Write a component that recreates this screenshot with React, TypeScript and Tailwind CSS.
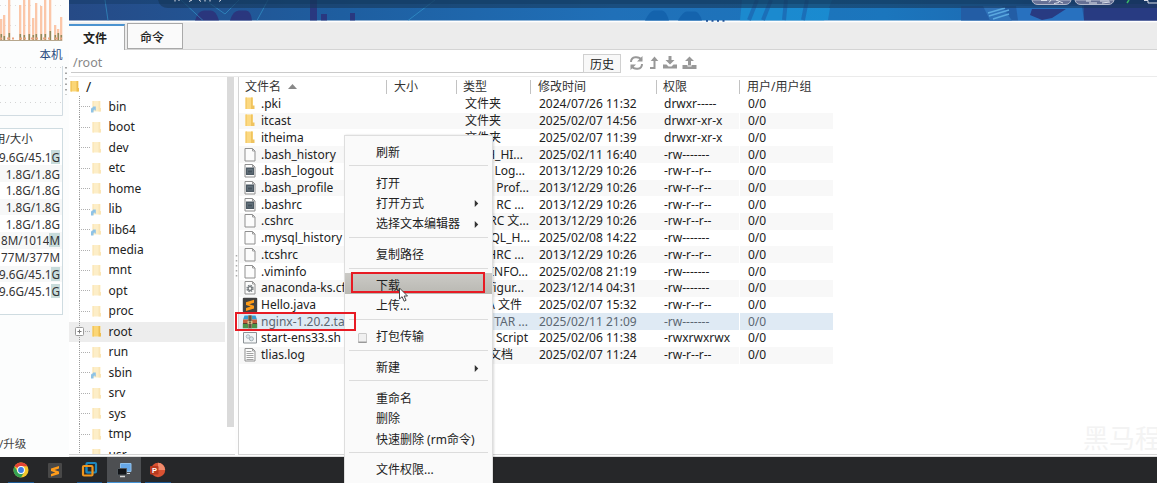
import React from "react";

type Kind = "folder" | "page" | "shell" | "config" | "sublime" | "archive" | "script" | "log";
type FileRow = { name: string; kind: Kind; type: string; end: number; time: string; perm: string; selected?: boolean };

const files: FileRow[] = [
  { name: ".pki", kind: "folder", type: "文件夹", end: 501, time: "2024/07/26 11:32", perm: "drwxr-----" },
  { name: "itcast", kind: "folder", type: "文件夹", end: 501, time: "2025/02/07 14:56", perm: "drwxr-xr-x" },
  { name: "itheima", kind: "folder", type: "文件夹", end: 501, time: "2025/02/07 11:39", perm: "drwxr-xr-x" },
  { name: ".bash_history", kind: "page", type: "BASH_HI...", end: 523, time: "2025/02/11 16:40", perm: "-rw-------" },
  { name: ".bash_logout", kind: "shell", type: "Bash Log...", end: 525, time: "2013/12/29 10:26", perm: "-rw-r--r--" },
  { name: ".bash_profile", kind: "shell", type: "Bash Prof...", end: 529, time: "2013/12/29 10:26", perm: "-rw-r--r--" },
  { name: ".bashrc", kind: "shell", type: "Bash RC ...", end: 524, time: "2013/12/29 10:26", perm: "-rw-r--r--" },
  { name: ".cshrc", kind: "page", type: "CSHRC 文...", end: 529, time: "2013/12/29 10:26", perm: "-rw-r--r--" },
  { name: ".mysql_history", kind: "page", type: "MYSQL_H...", end: 530, time: "2025/02/08 14:22", perm: "-rw-------" },
  { name: ".tcshrc", kind: "page", type: "TCSHRC ...", end: 524, time: "2013/12/29 10:26", perm: "-rw-r--r--" },
  { name: ".viminfo", kind: "page", type: "VIMINFO...", end: 528, time: "2025/02/08 21:19", perm: "-rw-------" },
  { name: "anaconda-ks.cfg", kind: "config", type: "Configur...", end: 524, time: "2023/12/14 04:31", perm: "-rw-------" },
  { name: "Hello.java", kind: "sublime", type: "JAVA 文件", end: 522, time: "2025/02/07 15:32", perm: "-rw-r--r--" },
  { name: "nginx-1.20.2.tar", kind: "archive", type: "TAR ...", end: 528, time: "2025/02/11 21:09", perm: "-rw-------", selected: true },
  { name: "start-ens33.sh", kind: "script", type: "Shell Script", end: 528, time: "2025/02/06 11:38", perm: "-rwxrwxrwx" },
  { name: "tlias.log", kind: "log", type: "文本文档", end: 513, time: "2025/02/07 11:24", perm: "-rw-r--r--" },
];

const tree = ["bin", "boot", "dev", "etc", "home", "lib", "lib64", "media", "mnt", "opt", "proc", "root", "run", "sbin", "srv", "sys", "tmp", "usr"];
const links = ["bin", "lib", "lib64", "sbin"];

const disks: [string, string][] = [
  ["9.6G/45.1", "G"], ["1.8G/1.8G", ""], ["1.8G/1.8G", ""], ["1.8G/1.8G", ""], ["1.8G/1.8G", ""],
  ["8M/1014", "M"], ["77M/377M", ""], ["9.6G/45.1", "G"], ["9.6G/45.1", "G"],
];

type Item = { label: string; arrow?: boolean; check?: boolean; hot?: boolean } | null;
const menu: Item[] = [
  { label: "刷新" }, null,
  { label: "打开" }, { label: "打开方式", arrow: true }, { label: "选择文本编辑器", arrow: true }, null,
  { label: "复制路径" }, null,
  { label: "下载", hot: true }, { label: "上传..." }, null,
  { label: "打包传输", check: true }, null,
  { label: "新建", arrow: true }, null,
  { label: "重命名" }, { label: "删除" }, { label: "快速删除 (rm命令)" }, null,
  { label: "文件权限..." },
];

function Folder({ strong, link }: { strong?: boolean; link?: boolean }) {
  return (
    <svg width="12" height="13" viewBox="0 0 12 13" className="shrink-0">
      <path d="M1.500 1h8v10.500h-8z" fill={strong ? "#fbd676" : "#fdeec8"} />
      <path d="M7.500 1h1.500v7h1v3.500H7.500z" fill={strong ? "#edbd50" : "#fae5b6"} />
      <path d="M1.500 1h1.500v10.500H1.500z" fill={strong ? "#f3c75f" : "#fbe8bb"} />
      {link && <path d="M0 12.500V9.600c0-1.400.8-2 2-2V6.400h2.800v4H3.700v-1C2.400 9.600 2.500 11 2.500 12.500z" fill="#8fc3e6" />}
    </svg>
  );
}

function FileIcon({ kind }: { kind: Kind }) {
  if (kind === "folder")
    return (
      <svg width="16" height="16" viewBox="0 0 16 16" className="shrink-0">
        <path d="M3.500 1.500h7.500v11.500H3.500z" fill="#fcd981" />
        <path d="M9 1.500h1.500v8h2V13H9z" fill="#efc35f" />
        <path d="M3.500 1.500H5V13H3.500z" fill="#f5cc6c" />
      </svg>
    );
  if (kind === "sublime")
    return (
      <svg width="16" height="16" viewBox="0 0 16 16" className="shrink-0">
        <rect x=".8" y=".8" width="14.400" height="14.400" rx="1" fill="#424242" />
        <path d="M4 5.300 12 2.800v2.900L7.300 7.200l4.700 1.500v2.700L4 13.900V11l4.700-1.500L4 8z" fill="#ff9c18" />
      </svg>
    );
  if (kind === "archive")
    return (
      <svg width="16" height="16" viewBox="0 0 16 16" className="shrink-0">
        <path d="M2.500 1.500h11L15 5.500H1z" fill="#379bd2" />
        <path d="M1 5.500h14V9.500H1z" fill="#c7603f" />
        <path d="M.8 9.500h14.400v4.800H.8z" fill="#4d9349" />
        <path d="M1 9h14v1H1z" fill="#5c402f" />
        <path d="M6 1.500h4v12.800H6z" fill="#8d7c5e" />
        <path d="M7.200 1.500h1.600v12.500H7.200z" fill="#554c3c" />
        <path d="M5.500 7h5v3h-5z" fill="#d5bd8a" />
        <path d="M7.200 7.500h1.600v2H7.200z" fill="#55442c" />
      </svg>
    );
  if (kind === "script")
    return (
      <svg width="16" height="16" viewBox="0 0 16 16" className="shrink-0">
        <path d="M1.500 2.500h13v10.500h-13z" fill="#f5f7f8" stroke="#8c9296" />
        <circle cx="6" cy="6.500" r="1.800" fill="#d9e6ec" stroke="#afbbc1" />
        <circle cx="9.400" cy="8.800" r="2" fill="#d9e6ec" stroke="#a3afb5" />
      </svg>
    );
  return (
    <svg width="16" height="16" viewBox="0 0 16 16" className="shrink-0">
      <path d="M3 1.500h7.500l2.500 2.500v10H3z" fill="#fcfcfc" stroke="#8f8f8f" />
      <path d="M10.500 1.500V4H13" fill="none" stroke="#9c9c9c" />
      {kind === "shell" && (
        <g>
          <path d="M4 4.500h8v7.500H4z" fill="#4c5963" />
          <path d="M5.200 6h5.600v4.500H5.200z" fill="#64727c" />
          <path d="M6 7.500h4v2H6z" fill="#46535d" />
        </g>
      )}
      {kind === "config" && (
        <g>
          <circle cx="8" cy="8.500" r="3" fill="none" stroke="#7a8084" strokeWidth="1.400" strokeDasharray="1.570 .785" />
          <circle cx="8" cy="8.500" r="1.900" fill="#fff" stroke="#6d7377" strokeWidth="1.200" />
        </g>
      )}
      {kind === "log" && <path d="M4.500 4.500h5M4.500 6.500h7M4.500 8.500h7M4.500 10.500h7M4.500 12.500h7" stroke="#a2a2a2" />}
    </svg>
  );
}

function Sidebar() {
  const bars = [[0, 22, 7], [3, 26, 5], [8, 42, 8], [19, 36, 7], [23, 42, 6], [28, 42, 7], [32, 23, 6], [35, 38, 7], [40, 35, 7], [44, 42, 7], [49, 42, 10], [54, 16, 6], [57, 12, 8], [60, 24, 6]];
  return (
    <aside className="flex h-[457px] w-[69px] shrink-0 flex-col overflow-hidden bg-[#fcfdfd]">
      <svg width="63" height="42" viewBox="0 0 63 42" className="shrink-0">
        <path d="M0 5.500h62M0 25.500h62" stroke="#ddd" strokeDasharray="1 4" />
        {bars.map(([x, h, g]) => (
          <g key={x}>
            <rect x={x} y={41 - h} width="2.300" height={h} fill="#fbc7a9" />
            <rect x={x + 0.5} y={41 - g} width="1.600" height={g} fill="#8f8a5c" />
          </g>
        ))}
        <path d="M0 38.500h62" stroke="#e8a480" strokeDasharray="2 5 3 2" strokeWidth="2" />
        <path d="M0 40.500h62" stroke="#b7a78d" />
      </svg>
      <div className="flex h-6 items-center pl-[39.500px] text-[11.500px] text-[#294a7d]"><span className="mt-[2px]">本机</span></div>
      <div className="flex">
        <svg width="63" height="51" viewBox="0 0 63 51">
          <path d="M0 1.500h62M0 19.500h62M0 36.500h62" stroke="#d5d5d5" strokeDasharray="1 4" />
          <path d="M62.500 0v49.500H0" stroke="#d2dce2" fill="none" />
        </svg>
        <svg width="6" height="30" viewBox="0 0 6 30"><path d="M3 1v28" stroke="#888" strokeWidth="1.500" strokeDasharray="1.500 4" /></svg>
      </div>
      <div className="mt-[11px] flex h-[187px] w-[63px] flex-col border-y border-r border-[#cfdce1] bg-white text-[#333]">
        <div className="flex h-[19.500px] items-center"><span className="-ml-[6px] text-[11.500px] whitespace-nowrap">用/大小</span></div>
        {disks.map(([a, b], i) => (
          <div key={i} className="flex h-[16.720px] items-center justify-end pr-[2px] text-[11.700px] leading-[16px] whitespace-nowrap odd:bg-[#f7f8f8]">
            <span>{a}</span>
            {b && <span className="bg-[#c8dcdb] leading-[14px]">{b}</span>}
          </div>
        ))}
      </div>
      <div className="mt-auto mb-[4px] -ml-[1px] text-[11.500px] leading-[18px] text-[#444]">/升级</div>
    </aside>
  );
}

function Banner() {
  return (
    <svg width="1088" height="23" viewBox="69 0 1088 23" className="shrink-0">
      <defs>
        <linearGradient id="sky" x1="0" x2="1">
          <stop offset="0" stopColor="#264a86" />
          <stop offset=".25" stopColor="#1e5ea0" />
          <stop offset=".5" stopColor="#2070b8" />
          <stop offset=".75" stopColor="#1b76bd" />
          <stop offset=".85" stopColor="#1d6cb4" />
          <stop offset="1" stopColor="#293c83" />
        </linearGradient>
      </defs>
      <path fill="#fff" d="M69 0h1088v23H69z" />
      <path fill="url(#sky)" d="M69 0h1088v20.500H69z" />
      <path fill="#2d2c76" d="M195 20.500q3-10 9-10h7q5 0 8 10zM230 20.500q3-10 9-10h7q5 0 6 10zM310 0h7v20.500h-7zM321 14h6v6.500h-6zM350 13h5v7.500h-5z" opacity=".75" />
      <path fill="#1463ad" d="M645 20.500q5-10 9-10h8q4 0 7 10zM678 20.500q5-9 9-9h8q4 0 7 9z" />
      <path fill="#1a9ce0" d="M742 0h90l-8 20.500h-84zM818 8h12l-2 12h-14z" opacity=".55" />
      <path stroke="#1b65af" strokeWidth="4" d="M757 0l-8 20M771 0l-8 20M786 0l-2 20M807 0l-4 20" opacity=".7" />
      <path fill="#235da5" d="M961 6h57v14.500h-57z" />
      <path fill="#2f72b9" d="M983 6h19l10 14.500h-22z" />
      <path stroke="#5aa8df" strokeWidth="1.500" d="M988 13l17-5M989 16l20-6M993 19l16-5" />
      <path fill="#2871bf" d="M1016 6h66l2 14.500h-66z" />
      <path fill="#283b82" d="M1032 9h34l-14 9-10 2-12-5zM1084 0h73v20.500h-73z" />
      <path stroke="#39a4d6" fill="none" d="M105 0l3 20.500M181 0l22 20.500M205 0l20 14 14-14M268 0l-11 20.500M435 0l-27 20.500" opacity=".55" />
      <path fill="#173758" opacity=".6" d="M158 0h999v8H168q-8 0-10-8z" />
      <path fill="#0e3457" opacity=".35" d="M69 0h1088v4H69z" />
      <g fill="#667094" stroke="#b1b8cb">
        <path d="M1032 0q1 4.500 6 4.500h27q5 0 6-4.500zM1075 0q1 4.500 6 4.500h27q5 0 6-4.500z" />
      </g>
      <g fill="none" stroke="#dce0ea" strokeWidth="1">
        <path d="M1041 .5h6M1051 0l-2 2.500M1056 0l7 3M1059 2.500l-5 1M1086 1h5M1089 3h8M1100 1h9M1102 3l8-1M175 0v1.500M179 0v1M192 0l-3 1.500M199 0l2 1.500M205 0v1.500M210 0v1.500M221 0l-2 1.500" />
        <path stroke="#3ab667" strokeWidth="1.500" d="M1129 0l-2 3" />
        <path d="M1144 .5h4V3h9" />
      </g>
      <path d="M706 20.800h20" stroke="#1f539a" strokeWidth="1.800" strokeDasharray="2 3.500" />
      <path d="M69 22.500h1088" stroke="#f2f2f2" />
    </svg>
  );
}

function Tools() {
  return (
    <svg width="70" height="18" viewBox="0 0 70 18" className="ml-[8px]" fill="none" stroke="#989898" strokeWidth="2">
      <path d="M2 8C2 2 10 2 12.500 6M13 10C13 16 5 16 2.500 12" />
      <path d="M13.500 2v5.500H8zM1.500 16v-5.500H7z" fill="#989898" stroke="none" />
      <path d="M21 14h4.500V5" />
      <path d="M25.500 2.500l3.800 4.500h-7.600z" fill="#989898" stroke="none" />
      <path d="M41 2v5" strokeWidth="3" />
      <path d="M36.500 6h9L41 10.500z M34 10.500h3.500l2 2h3l2-2H48v4H34z" fill="#989898" stroke="none" />
      <path d="M60.500 6.500v5" strokeWidth="3" />
      <path d="M56 7h9l-4.500-4.500z M53.500 11h5v1.500h4V11h5v4h-14z" fill="#989898" stroke="none" />
    </svg>
  );
}

function Tree() {
  return (
    <div className="flex h-[378px] w-[166px] shrink-0 overflow-hidden border-b border-[#d4d4d4] bg-white">
      <div className="w-[156px] shrink-0 text-[#222]">
        <div className="flex h-[19.500px] items-center">
          <Folder strong /><span className="ml-[5px] text-[14px]">/</span>
        </div>
        {tree.map((n) => (
          <div key={n} className={"flex h-[20.470px] items-center " + (n === "root" ? "bg-[#ededed]" : "")}>
            <svg width="22" height="21" viewBox="0 0 22 21" className="shrink-0">
              <path d="M10.500 0v21" stroke="#9b9b9b" strokeDasharray="1 1" />
              <path d="M12 10.500h10" stroke="#b0b0b0" strokeDasharray="1 1" />
              {n === "root" && <g stroke="#9a9a9a" fill="#fff"><rect x="6.500" y="6.500" width="8" height="8" rx="1" /><path d="M8.500 10.500h4M10.500 8.500v4" stroke="#777" /></g>}
            </svg>
            <Folder strong={n === "root"} link={links.includes(n)} />
            <span className="ml-[5.500px]">{n}</span>
          </div>
        ))}
      </div>
      <div className="ml-[2px] h-[350px] w-[7px] bg-[#dadada]" />
    </div>
  );
}

const cell = "flex h-full shrink-0 items-center whitespace-pre";

function FileList() {
  return (
    <div className="flex h-[378px] min-w-0 flex-1 flex-col overflow-hidden border-b border-l border-[#d4d4d4] bg-white">
      <div className="flex h-[19px] shrink-0 items-center pt-px text-[#333]">
        <div className="flex w-[147px] shrink-0 items-center gap-[7px] pl-[6px]">
          文件名
          <svg width="9" height="5" viewBox="0 0 9 5" className="-mt-[2px]"><path d="M0 5 4.500 0 9 5z" fill="#888" /></svg>
        </div>
        <div className="flex h-[14px] w-[70px] shrink-0 items-center border-l border-[#c2c2c2] pl-[7px]">大小</div>
        <div className="flex h-[14px] w-[74px] shrink-0 items-center border-l border-[#c2c2c2] pl-[6px]">类型</div>
        <div className="flex h-[14px] w-[126px] shrink-0 items-center border-l border-[#c2c2c2] pl-[7px]">修改时间</div>
        <div className="flex h-[14px] w-[83px] shrink-0 items-center border-l border-[#c2c2c2] pl-[6px]">权限</div>
        <div className="flex h-[14px] items-center border-l border-[#c2c2c2] pl-[7px]">用户/用户组</div>
      </div>
      {files.map((f) => (
        <div key={f.name} className={"flex h-[16.730px] w-[594px] shrink-0 items-center " + (f.selected ? "bg-[#dfeaf4] text-[#5c6772]" : "text-[#222] odd:bg-[#f8f8f8]")}>
          <div className={cell + " w-[148px] overflow-hidden pl-[3px]"}><FileIcon kind={f.kind} /><span className="ml-[3px]">{f.name}</span></div>
          <div className={cell + " w-[70px]"} />
          <div className={cell + " justify-end"} style={{ width: f.end - 457 }}>{f.type}</div>
          <div className={cell} style={{ width: 657 - f.end, paddingLeft: 539 - f.end }}>{f.time}</div>
          <div className={cell + " w-[83px] border-r border-white pl-[7px]"}>{f.perm}</div>
          <div className={cell + " pl-[8px]"}>0/0</div>
        </div>
      ))}
    </div>
  );
}

function ContextMenu() {
  return (
    <div className="absolute top-[135px] left-[344px] flex h-[360px] w-[149px] flex-col border border-[#dedede] bg-[#fafafa] pt-[4px] text-[#222] shadow-[1px_0_2px_rgba(0,0,0,0.15)]">
      {menu.map((m, i) =>
        m === null ? (
          <div key={i} className="flex h-[10.370px] shrink-0 items-center px-[4px]"><div className="h-px flex-1 bg-[#dcdcdc]" /></div>
        ) : (
          <div key={i} className={"flex h-[20.450px] shrink-0 items-center pt-[5px] whitespace-nowrap " + (m.hot ? "bg-linear-to-b from-[#cbcac6] to-[#b9b8b2]" : "")}>
            <div className="flex w-[31px] shrink-0 items-center pl-[13px]">
              {m.check && <div className="size-[9px] rounded-[1px] border border-[#c9c9c9] bg-[#f0f0f0] shadow-[0_1px_0_#999]" />}
            </div>
            <span className="flex-1">{m.label}</span>
            {m.arrow && <svg width="5" height="7" viewBox="0 0 5 8" className="mr-[13px]"><path d="M.5 0v8L4.500 4z" fill="#333" /></svg>}
          </div>
        )
      )}
    </div>
  );
}

function Taskbar() {
  const line = "flex h-[26px] items-center justify-center border-b";
  return (
    <footer className="flex h-[26px] w-full shrink-0 bg-[#262729]">
      <div className={line + " ml-[8px] w-[26px] border-[#1d5b96]"}>
        <svg width="16" height="16" viewBox="0 0 16 16" className="mt-px">
          <circle cx="8" cy="8" r="7.500" fill="#f4c62c" />
          <path d="M8 8 1.500 4.250A7.500 7.500 0 0 1 14.500 4.250H8z" fill="#e44436" />
          <path d="M1.500 4.250A7.500 7.500 0 0 0 8 15.500l3.200-5.600L8 8 4.800 9.900z" fill="#35a153" />
          <circle cx="8" cy="8" r="3.900" fill="#fff" />
          <circle cx="8" cy="8" r="2.900" fill="#3c7de6" />
        </svg>
      </div>
      <div className="ml-[14px] flex w-[14px] items-center">
        <svg width="14" height="15" viewBox="0 0 14 15"><rect width="14" height="15" rx="1" fill="#484848" /><path d="M3 5.400 11 3v2.600L6.600 7 11 8.400V11l-8 2.600V11l4.400-1.500L3 8z" fill="#ff9c1b" /></svg>
      </div>
      <div className={line + " ml-[15px] w-[25px] border-[#1d5b96]"}>
        <svg width="17" height="17" viewBox="0 0 17 17" fill="none" strokeWidth="2.200">
          <rect x="5.500" y="2" width="9.500" height="9.500" rx="1" stroke="#1d87be" />
          <rect x="2" y="5" width="9.500" height="9.500" rx="1" stroke="#ef961e" />
          <path d="M5.500 6.500v5h4" stroke="#1d87be" strokeWidth="1.600" />
        </svg>
      </div>
      <div className={line + " ml-[5px] w-[34px] border-[#4695d8] bg-[#4d4f52]"}>
        <svg width="16" height="16" viewBox="0 0 16 16">
          <path d="M4.500 1.500h10.500v8H4.500z" fill="#66a7e7" stroke="#8fbfe9" />
          <path d="M11 11.500h3" stroke="#d1d7dc" />
          <path d="M1.500 6.500h9V13h-9z" fill="#111418" stroke="#50565b" />
          <path d="M4 14.500h5" stroke="#d5d5d5" strokeWidth="1.500" />
        </svg>
      </div>
      <div className={line + " ml-[4px] w-[26px] border-[#1d5b96]"}>
        <svg width="17" height="16" viewBox="0 0 17 16" className="mr-[2px]">
          <circle cx="9" cy="8" r="7.200" fill="#d95232" /><path d="M9 .8A7.200 7.200 0 0 1 16.200 8H9z" fill="#f18b6c" />
          <rect x="1" y="4" width="8.500" height="8.500" rx="1" fill="#b93a20" />
          <text x="3" y="11" fontSize="7.500" fontWeight="700" fill="#fff" fontFamily="Liberation Sans, sans-serif">P</text>
        </svg>
      </div>
    </footer>
  );
}

export default function App() {
  return (
    <div className="relative flex h-[483px] w-[1157px] flex-col overflow-hidden bg-[#fdfdfd] font-['Noto_Sans','Noto_Sans_CJK_SC',sans-serif] text-[12px] leading-[16px]">
      <div className="flex h-[457px] shrink-0">
        <Sidebar />
        <main className="flex w-[1088px] flex-col">
          <Banner />
          <div className="flex h-[27px] shrink-0 items-end border-b border-[#d4d4d4] bg-[#ececec] text-[#222]">
            <div className="-mb-px flex h-[26px] w-[56px] items-center border-t-2 border-r border-t-[#4b93d0] border-r-[#aaa] bg-[#fcfdfe] pt-[2px] pl-[14px] font-bold">文件</div>
            <div className="ml-[2px] flex h-[26px] w-[56px] items-center border border-[#a9a9a9] bg-[#fafafa] pt-[4px] pl-[12px] font-medium">命令</div>
          </div>
          <div className="flex h-[26px] shrink-0 items-start bg-white">
            <div className="ml-[2px] flex h-[23px] w-[512px] items-center border-b border-[#cacaca] pt-[4px] pl-[2px] text-[12.500px] text-[#888]">/root</div>
            <div className="mt-[4px] flex h-[19px] w-[38px] items-center justify-center border border-[#d0d0d0] bg-[#f8f8f8] pt-[2px] text-[#222]">历史</div>
            <div className="mt-[4px]"><Tools /></div>
          </div>
          <div className="flex border-t border-[#ebebeb]">
            <Tree />
            <div className="flex w-[3px] items-center"><svg width="3" height="24" viewBox="0 0 3 24"><path d="M1.500 1v22" stroke="#aaa" strokeWidth="1.500" strokeDasharray="1.500 3.500" /></svg></div>
            <FileList />
          </div>
          <div className="mt-px h-px shrink-0 bg-[#dedede]" />
        </main>
      </div>
      <Taskbar />
      <div className="absolute top-[423px] left-[1083px] w-[74px] overflow-hidden text-[26px] leading-[30px] whitespace-nowrap text-[#f3f3f3]">黑马程</div>
      <ContextMenu />
      <div className="absolute top-[272px] left-[351px] h-[21px] w-[134px] border-2 border-[#e71b24]" />
      <div className="absolute top-[312px] left-[235px] h-[19px] w-[121px] border-2 border-[#e71b24]" />
      <svg className="absolute top-[287px] left-[398px]" width="11" height="16" viewBox="0 0 11 16">
        <path d="M1.500 1v11l2.600-2.300 2 4.500 2-.9-2-4.300h3.400z" fill="#fff" stroke="#444" />
      </svg>
    </div>
  );
}
